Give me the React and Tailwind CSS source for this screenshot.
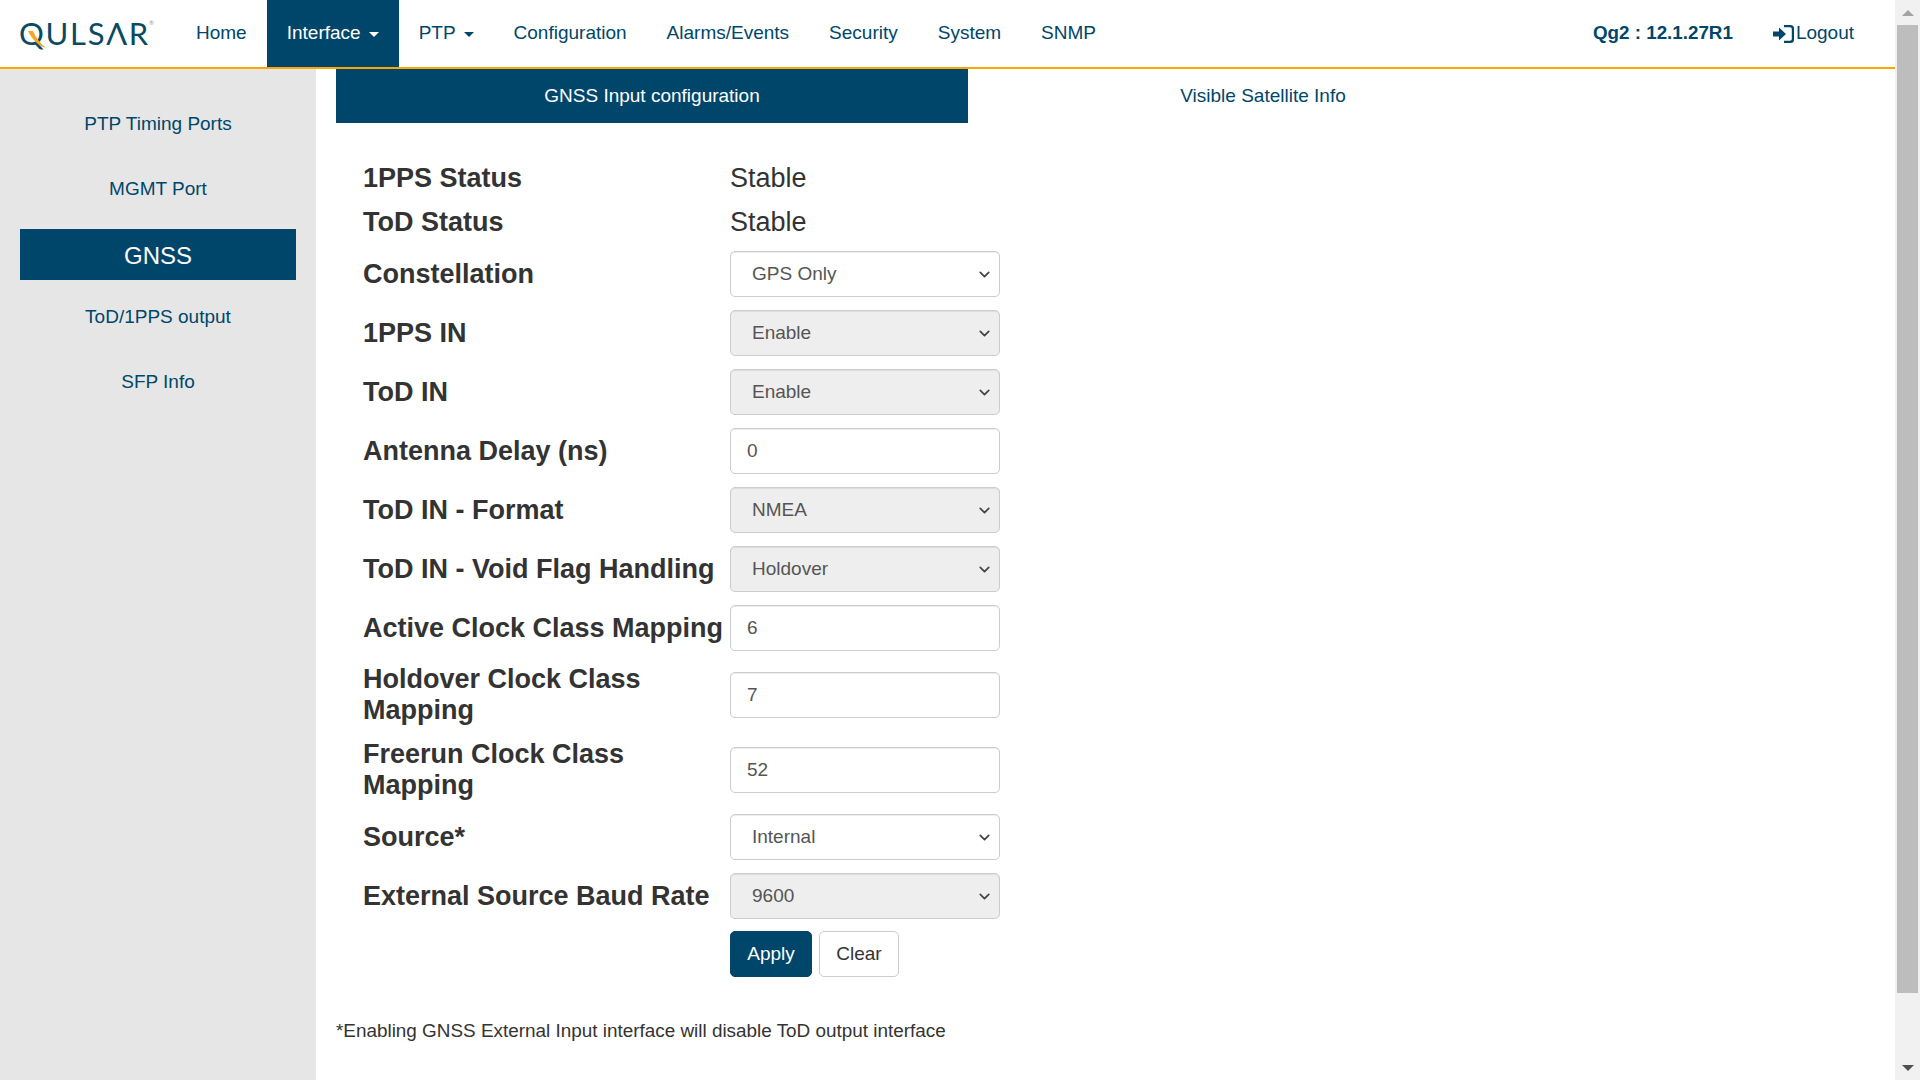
import React from "react";
import { ChevronDown } from "lucide-react";

const NAVY = "#00466a";

const navLinks = [
  { label: "Home" },
  { label: "Interface", caret: true, active: true },
  { label: "PTP", caret: true },
  { label: "Configuration" },
  { label: "Alarms/Events" },
  { label: "Security" },
  { label: "System" },
  { label: "SNMP" },
];

const rows = [
  { label: "1PPS Status", text: "Stable" },
  { label: "ToD Status", text: "Stable" },
  { label: "Constellation", select: "GPS Only" },
  { label: "1PPS IN", select: "Enable", disabled: true },
  { label: "ToD IN", select: "Enable", disabled: true },
  { label: "Antenna Delay (ns)", input: "0" },
  { label: "ToD IN - Format", select: "NMEA", disabled: true },
  { label: "ToD IN - Void Flag Handling", select: "Holdover", disabled: true },
  { label: "Active Clock Class Mapping", input: "6" },
  { label: "Holdover Clock Class Mapping", input: "7" },
  { label: "Freerun Clock Class Mapping", input: "52" },
  { label: "Source*", select: "Internal" },
  { label: "External Source Baud Rate", select: "9600", disabled: true },
];

function Logo() {
  return (
    <div className="relative w-[176px] pl-[19px] text-[31px] leading-none tracking-[1.7px] text-[#0b4a63] font-['Lato',sans-serif] font-normal whitespace-nowrap">
      QULSΛR
      <span className="absolute left-[149px] top-[2px] text-[6px] tracking-normal text-[#8a9aa3]">®</span>
      <svg className="absolute left-[27px] top-[12px]" width="20" height="20" viewBox="0 0 20 20">
        <path d="M1 1 L6 1 C9 8 13 13 19 18 C11 16 5 9 1 1 Z" fill="#f5a623" />
      </svg>
    </div>
  );
}

function NavBar() {
  return (
    <nav className="flex h-[69px] shrink-0 items-stretch border-b-2 border-[#ffa500] text-[19px] text-[#00466a]">
      <div className="flex items-center"><Logo /></div>
      {navLinks.map((l) => (
        <a
          key={l.label}
          className={`flex items-center px-5 ${l.active ? "bg-[#00466a] text-white" : ""}`}
        >
          {l.label}
          {l.caret && <span className="ml-[8px] mt-[2px] h-0 w-0 border-x-[5px] border-t-[5px] border-x-transparent border-t-current" />}
        </a>
      ))}
      <div className="ml-auto flex items-center pr-[41px]">
        <span className="text-[18.8px] font-bold">Qg2 : 12.1.27R1</span>
        <svg className="ml-[40px] mr-[2px]" width="21" height="18" viewBox="0 0 21 18" fill={NAVY}>
          <path d="M0 6.5h6V2.5l7 6.500-7 6.500v-4H0z" />
          <path d="M11 0h6.500A3.500 3.500 0 0 1 21 3.500v11a3.500 3.500 0 0 1-3.500 3.500H11v-2.200h6a1.800 1.800 0 0 0 1.800-1.800V4a1.800 1.800 0 0 0-1.800-1.800h-6z" />
        </svg>
        <span>Logout</span>
      </div>
    </nav>
  );
}

function Sidebar() {
  const link = "flex h-[40px] items-center justify-center text-[19px] text-[#00466a]";
  return (
    <aside className="flex w-[316px] shrink-0 flex-col bg-[#e6e6e6] px-5 pt-[35px]">
      <a className={`${link} mb-[25px]`}>PTP Timing Ports</a>
      <a className={`${link} mb-[20px]`}>MGMT Port</a>
      <a className="mb-[17px] flex h-[51px] items-center justify-center bg-[#00466a] pt-[2px] text-[24px] text-white">GNSS</a>
      <a className={`${link} mb-[25px]`}>ToD/1PPS output</a>
      <a className={link}>SFP Info</a>
    </aside>
  );
}

function FormRow({ row, last }) {
  const box = "h-[46px] w-[270px] rounded-[5px] border border-[#ccc] text-[19px] text-[#555] shadow-[inset_0_1px_1px_rgba(0,0,0,0.075)]";
  return (
    <div className={`flex items-center ${last ? "mb-[12px]" : "mb-[13px]"}`}>
      <label className="w-[367px] shrink-0 text-[27px] font-bold leading-[31px] text-[#333]">{row.label}</label>
      {row.text && <span className="text-[27px] leading-[31px] text-[#333]">{row.text}</span>}
      {row.select && (
        <div className="relative">
          <select
            defaultValue={row.select}
            disabled={row.disabled}
            className={`${box} block appearance-none pl-[21px] pt-[1px] ${row.disabled ? "bg-[#eee] opacity-100" : "bg-white"}`}
          >
            <option>{row.select}</option>
          </select>
          <ChevronDown className="pointer-events-none absolute right-[7px] top-[15px] text-[#444]" size={17} strokeWidth={2.4} />
        </div>
      )}
      {row.input && <input defaultValue={row.input} className={`${box} bg-white px-[16px]`} />}
    </div>
  );
}

function Scrollbar() {
  return (
    <div className="flex w-[25px] shrink-0 flex-col items-center bg-[#f1f1f1]">
      <div className="flex h-[25px] shrink-0 items-center justify-center">
        <span className="h-0 w-0 border-x-[6px] border-b-[6px] border-x-transparent border-b-[#a3a3a3]" />
      </div>
      <div className="h-[968px] w-[21px] shrink-0 bg-[#bdbdbd]" />
      <div className="mt-auto flex h-[25px] shrink-0 items-center justify-center">
        <span className="h-0 w-0 border-x-[6px] border-t-[6px] border-x-transparent border-t-[#505050]" />
      </div>
    </div>
  );
}

export default function App() {
  return (
    <div className="flex h-[1080px] w-[1920px] overflow-hidden bg-white font-['Liberation_Sans',Arial,sans-serif]">
      <div className="flex min-w-0 flex-1 flex-col">
        <NavBar />
        <div className="flex min-h-0 flex-1">
          <Sidebar />
          <main className="flex-1 pl-5">
            <div className="flex text-[19px]">
              <div className="flex h-[54px] w-[632px] items-center justify-center bg-[#00466a] pt-[1px] text-white">GNSS Input configuration</div>
              <div className="flex h-[54px] w-[590px] items-center justify-center pt-[1px] text-[#00466a]">Visible Satellite Info</div>
            </div>
            <div className="pl-[27px] pt-[40px]">
              {rows.map((r, i) => <FormRow key={r.label} row={r} last={i === rows.length - 1} />)}
              <div className="flex gap-[7px] pl-[367px] text-[19px]">
                <button className="h-[46px] w-[82px] rounded-[5px] border border-[#00466a] bg-[#00466a] pt-[1px] text-white">Apply</button>
                <button className="h-[46px] w-[80px] rounded-[5px] border border-[#ccc] bg-white pt-[1px] text-[#333]">Clear</button>
              </div>
            </div>
            <p className="mt-[41px] text-[18.9px] leading-[26px] text-[#333]">*Enabling GNSS External Input interface will disable ToD output interface</p>
          </main>
        </div>
      </div>
      <Scrollbar />
    </div>
  );
}
